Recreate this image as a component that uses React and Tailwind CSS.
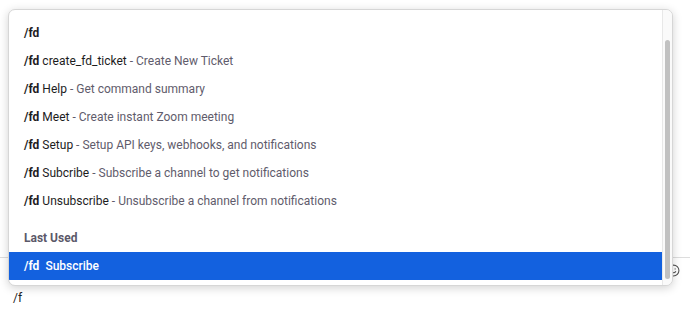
import { Smile } from "lucide-react";

const commands = [
  { name: "create_fd_ticket", desc: "Create New Ticket" },
  { name: "Help", desc: "Get command summary" },
  { name: "Meet", desc: "Create instant Zoom meeting" },
  { name: "Setup", desc: "Setup API keys, webhooks, and notifications" },
  { name: "Subcribe", desc: "Subscribe a channel to get notifications" },
  { name: "Unsubscribe", desc: "Unsubscribe a channel from notifications" },
];

const App = () => {
  return (
    <div
      className="relative h-[316px] w-[690px] overflow-hidden bg-white text-[12px] text-[#1d1c1d]"
      style={{ fontFamily: "Roboto, 'Noto Sans', sans-serif" }}
    >
      {/* composer behind the menu */}
      <div className="absolute left-0 right-0 top-[257px] border-t border-[#dddddd]" />
      <Smile className="absolute left-[667px] top-[264px] h-[13px] w-[13px] text-[#555]" strokeWidth={2} />
      <div className="absolute left-[13px] top-[289px]">/f</div>

      {/* autocomplete menu */}
      <div className="absolute left-[8px] top-[9px] flex h-[277px] w-[665px] overflow-hidden rounded-[7px] border border-[#d6d6d6] bg-white shadow-[0_2px_10px_rgba(0,0,0,0.18)]">
        <div className="flex flex-1 flex-col pt-[9px]">
          <div className="flex h-[28px] items-center px-[15px] font-bold">/fd</div>
          {commands.map((c) => (
            <div key={c.name} className="flex h-[28px] items-center whitespace-pre px-[15px]">
              <span className="font-bold">/fd</span>
              <span> {c.name}</span>
              <span className="text-[#5f5c6c]"> - {c.desc}</span>
            </div>
          ))}
          <div className="flex h-[37px] items-end px-[15px] pb-[5px] font-bold text-[#5b5869]">Last Used</div>
          <div className="flex h-[28px] items-center gap-[6px] bg-[#1361df] px-[15px] font-medium text-white">
            <span className="font-bold">/fd</span>
            <span>Subscribe</span>
          </div>
        </div>
        <div className="flex w-[10px] justify-center border-l border-[#e8e8e8] bg-[#fafafa] pt-[30px] pb-[6px]">
          <div className="w-[5px] rounded-full bg-[#c1c1c1]" />
        </div>
      </div>
    </div>
  );
};

export default App;
